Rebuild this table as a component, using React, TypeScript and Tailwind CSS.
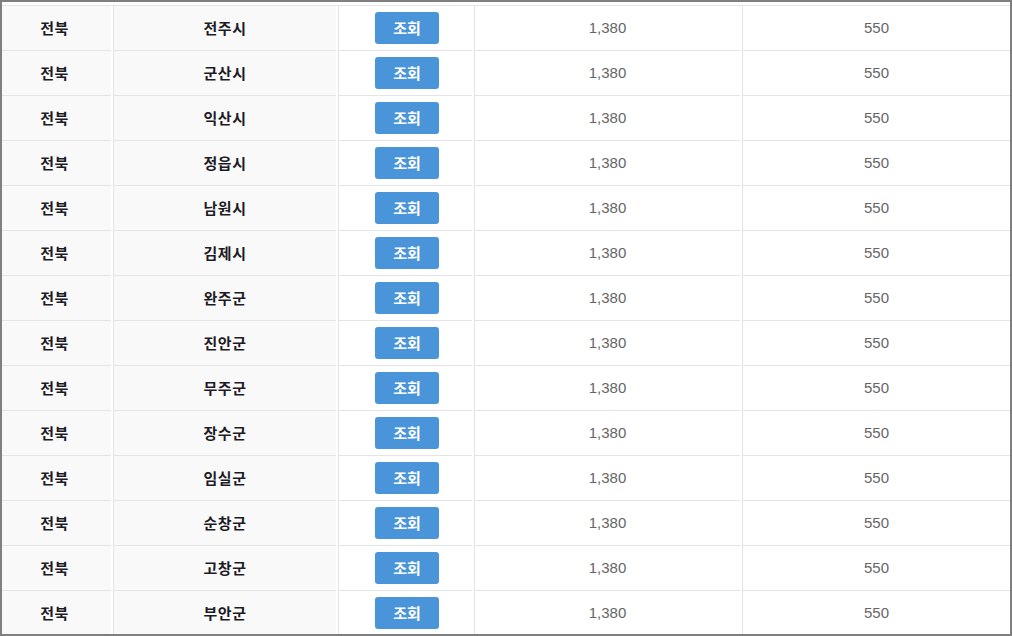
import React from 'react';

const rows = [
  '전주시', '군산시', '익산시', '정읍시', '남원시', '김제시', '완주군',
  '진안군', '무주군', '장수군', '임실군', '순창군', '고창군', '부안군',
];

const font = { fontFamily: '"Noto Sans CJK KR", "Noto Sans", sans-serif' };

export default function App() {
  return (
    <div className="w-[1012px] h-[636px] overflow-hidden border-2 border-[#7f7f7f] bg-white pt-[3px]" style={font}>
      <div className="border-t border-[#e4e4e4]">
        {rows.map((city) => (
          <div key={city} className="flex h-[45px] gap-[2px]">
            <div className="w-[109px] pr-[4px] bg-[#f9f9f9] border-b border-[#e4e4e4] flex items-center justify-center text-[15px] font-bold text-[#1d1b26] tracking-[0.5px]">
              전북
            </div>
            <div className="w-[223px] bg-[#f9f9f9] border-b border-l border-[#e4e4e4] flex items-center justify-center text-[15px] font-bold text-[#1d1b26] tracking-[0.5px]">
              {city}
            </div>
            <div className="w-[134px] pl-[3px] border-b border-l border-[#e4e4e4] flex items-center justify-center">
              <button className="w-[64px] h-[32px] rounded-[3px] bg-[#4a95da] text-white text-[15px] font-bold">
                조회
              </button>
            </div>
            <div className="w-[266px] border-b border-l border-[#e4e4e4] flex items-center justify-center text-[15px] text-[#666] font-['Liberation_Sans',sans-serif]">
              1,380
            </div>
            <div className="w-[268px] border-b border-l border-[#e4e4e4] flex items-center justify-center text-[15px] text-[#666] font-['Liberation_Sans',sans-serif]">
              550
            </div>
          </div>
        ))}
      </div>
    </div>
  );
}
